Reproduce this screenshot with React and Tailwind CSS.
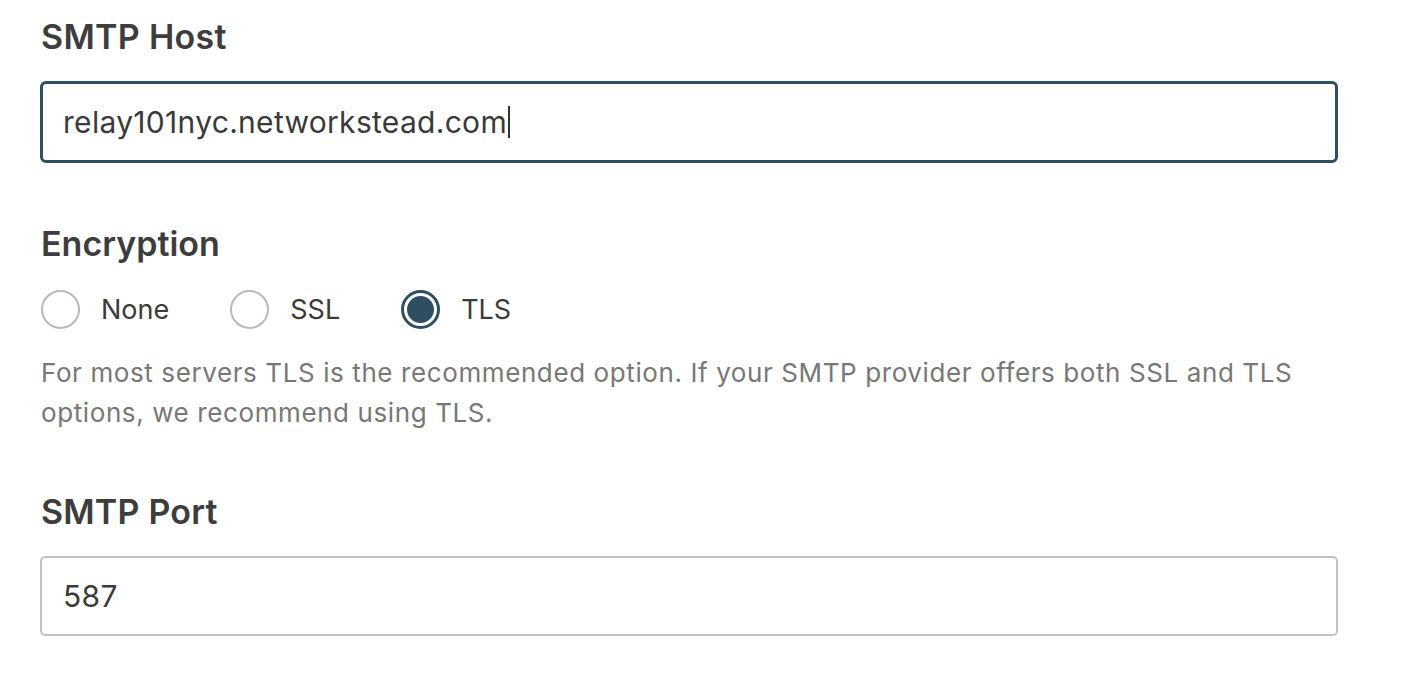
export default function App() {
  const font = { fontFamily: 'Inter, "Noto Sans", sans-serif' };
  return (
    <div className="w-[1424px] h-[680px] bg-white overflow-hidden" style={font}>
      <div className="ml-[40px] w-[1298px] flex flex-col pt-[17px]">
        <div className="h-[40px] leading-[40px] text-[34px] font-semibold text-[#3d3d3d] pl-[1px] tracking-[0.3px]">SMTP Host</div>
        <div className="mt-[24px] h-[82px] border-[3px] border-[#2e4f61] rounded-[6px] flex items-center pl-[20px]">
          <span className="text-[30px] text-[#3a3a3a] leading-none tracking-[0.3px]">relay101nyc.networkstead.com</span>
          <span className="ml-[1px] w-[2px] h-[32px] bg-[#333]"></span>
        </div>

        <div className="mt-[61px] h-[40px] leading-[40px] text-[34px] font-semibold text-[#3d3d3d] pl-[1px]">Encryption</div>
        <div className="mt-[26px] h-[39px] flex items-center gap-[61px] pl-[1px]">
          <label className="flex items-center gap-[21px]">
            <span className="w-[39px] h-[39px] rounded-full border-2 border-[#b8b8b8] bg-white"></span>
            <span className="text-[27px] text-[#3a3a3a] leading-none">None</span>
          </label>
          <label className="flex items-center gap-[21px]">
            <span className="w-[39px] h-[39px] rounded-full border-2 border-[#b8b8b8] bg-white"></span>
            <span className="text-[27px] text-[#3a3a3a] leading-none">SSL</span>
          </label>
          <label className="flex items-center gap-[21px]">
            <span className="w-[39px] h-[39px] rounded-full border-[3px] border-[#2e4f61] bg-white flex items-center justify-center">
              <span className="w-[27px] h-[27px] rounded-full bg-[#2e4f61]"></span>
            </span>
            <span className="text-[27px] text-[#3a3a3a] leading-none">TLS</span>
          </label>
        </div>
        <p className="mt-[24px] text-[26px] leading-[40px] text-[#777] pl-[1px] tracking-[0.6px]">
          For most servers TLS is the recommended option. If your SMTP provider offers both SSL and TLS options, we recommend using TLS.
        </p>

        <div className="mt-[59px] h-[40px] leading-[40px] text-[34px] font-semibold text-[#3d3d3d] pl-[1px] tracking-[0.2px]">SMTP Port</div>
        <div className="mt-[24px] h-[80px] border-2 border-[#c2c2c2] rounded-[5px] flex items-center pl-[21px]">
          <span className="text-[30px] text-[#3a3a3a] leading-none tracking-[0.3px]">587</span>
        </div>
      </div>
    </div>
  );
}
